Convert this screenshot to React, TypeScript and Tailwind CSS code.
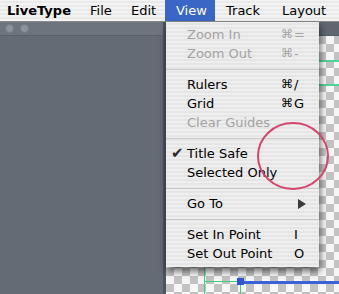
import React from 'react'

type Item =
  | { kind: 'sep' }
  | { kind: 'item'; label: string; mod?: string; key?: string; disabled?: boolean; checked?: boolean; submenu?: boolean }

const items: Item[] = [
  { kind: 'item', label: 'Zoom In', mod: '⌘', key: '=', disabled: true },
  { kind: 'item', label: 'Zoom Out', mod: '⌘', key: '-', disabled: true },
  { kind: 'sep' },
  { kind: 'item', label: 'Rulers', mod: '⌘', key: '/' },
  { kind: 'item', label: 'Grid', mod: '⌘', key: 'G' },
  { kind: 'item', label: 'Clear Guides', disabled: true },
  { kind: 'sep' },
  { kind: 'item', label: 'Title Safe', checked: true },
  { kind: 'item', label: 'Selected Only' },
  { kind: 'sep' },
  { kind: 'item', label: 'Go To', submenu: true },
  { kind: 'sep' },
  { kind: 'item', label: 'Set In Point', key: 'I' },
  { kind: 'item', label: 'Set Out Point', key: 'O' },
]

function MenuBar() {
  return (
    <div className="h-[22px] flex items-stretch text-[13px] leading-[21px] text-black border-b border-[#8a8a8a] bg-[repeating-linear-gradient(0deg,#f3f3f3_0px,#f3f3f3_2px,#e9e9e9_2px,#e9e9e9_4px)]">
      <div className="w-[79px] pl-[7px] font-bold">LiveType</div>
      <div className="w-[41px] pl-[11px]">File</div>
      <div className="w-[45px] pl-[11px]">Edit</div>
      <div className="w-[50px] pl-[11px] bg-[#3a67c6] text-white">View</div>
      <div className="w-[56px] pl-[11px]">Track</div>
      <div className="pl-[11px]">Layout</div>
    </div>
  )
}

function ViewMenu() {
  return (
    <div className="absolute left-[166px] top-[22px] w-[153px] pt-[3px] pb-[4px] text-[13px] shadow-[1px_4px_7px_rgba(0,0,0,0.6)] bg-[repeating-linear-gradient(0deg,#eeeeee_0px,#eeeeee_2px,#e5e5e5_2px,#e5e5e5_4px)]">
      {items.map((it, i) =>
        it.kind === 'sep' ? (
          <div key={i} className="h-[12px] flex items-center">
            <div className="h-px w-full bg-[#c9c9c9]" />
          </div>
        ) : (
          <div
            key={i}
            className={`h-[19px] leading-[19px] flex items-center ${it.disabled ? 'text-[#a3a3a3]' : 'text-black'}`}
          >
            <span className="w-[21px] pl-[5px] text-[15px] text-[#2a2a2a]">{it.checked ? '✔' : ''}</span>
            <span className="flex-1">{it.label}</span>
            <span className="w-[13px] text-right text-[12px]">{it.mod ?? ''}</span>
            <span className="w-[26px] pl-[1px]">
              {it.submenu ? (
                <svg width="8" height="10" viewBox="0 0 8 10" className="ml-[4px]">
                  <polygon points="0,0 8,5 0,10" fill="#3a3a3a" />
                </svg>
              ) : (
                it.key ?? ''
              )}
            </span>
          </div>
        )
      )}
    </div>
  )
}

export default function App() {
  return (
    <div className="w-[339px] h-[294px] relative overflow-hidden font-['DejaVu_Sans',sans-serif] bg-[#646b75]">
      <MenuBar />
      <div className="flex h-[272px]">
        <div className="w-[166px] flex flex-col bg-[#646b75] border-r-[3px] border-[#4e545d]">
          <div className="h-[14px] flex items-center gap-[6px] pl-[5px] bg-[#6e747e] border-b border-[#5a616b]">
            <span className="w-[9px] h-[9px] rounded-full bg-[#8d939b] border border-[#777d86]" />
            <span className="w-[9px] h-[9px] rounded-full bg-[#8d939b] border border-[#777d86]" />
          </div>
          <div className="flex-1" />
        </div>
        <div className="flex-1 flex flex-col">
          <div className="h-[14px] bg-[#5f6670] border-b border-[#565c66]" />
          <div className="flex-1 relative bg-[conic-gradient(#c2c2c2_25%,#f6f6f6_0_50%,#c2c2c2_0_75%,#f6f6f6_0)] bg-[length:16px_16px]">
            <div className="absolute left-[38px] top-[24px] right-0 h-[2px] bg-[#4cd49a]" />
            <div className="absolute left-[38px] top-[48px] right-0 h-[2px] bg-[#4cd49a]" />
            <div className="absolute left-[38px] top-[230px] bottom-0 w-px bg-[#3fcf7e]" />
            <div className="absolute left-[74px] top-[248px] bottom-0 w-px bg-[#3fcf7e]" />
            <div className="absolute left-[38px] top-[245px] w-[34px] h-px bg-[#3fcf7e]" />
            <div className="absolute left-[71px] top-[245px] right-0 h-[3px] bg-[#3b62d6]" />
            <div className="absolute left-[71px] top-[242px] w-[7px] h-[7px] bg-[#2f55d0]" />
          </div>
        </div>
      </div>
      <ViewMenu />
      <svg className="absolute left-0 top-0 pointer-events-none" width="339" height="294">
        <ellipse cx="293" cy="156" rx="35" ry="33" fill="none" stroke="#d4466d" strokeWidth="2" />
      </svg>
    </div>
  )
}
